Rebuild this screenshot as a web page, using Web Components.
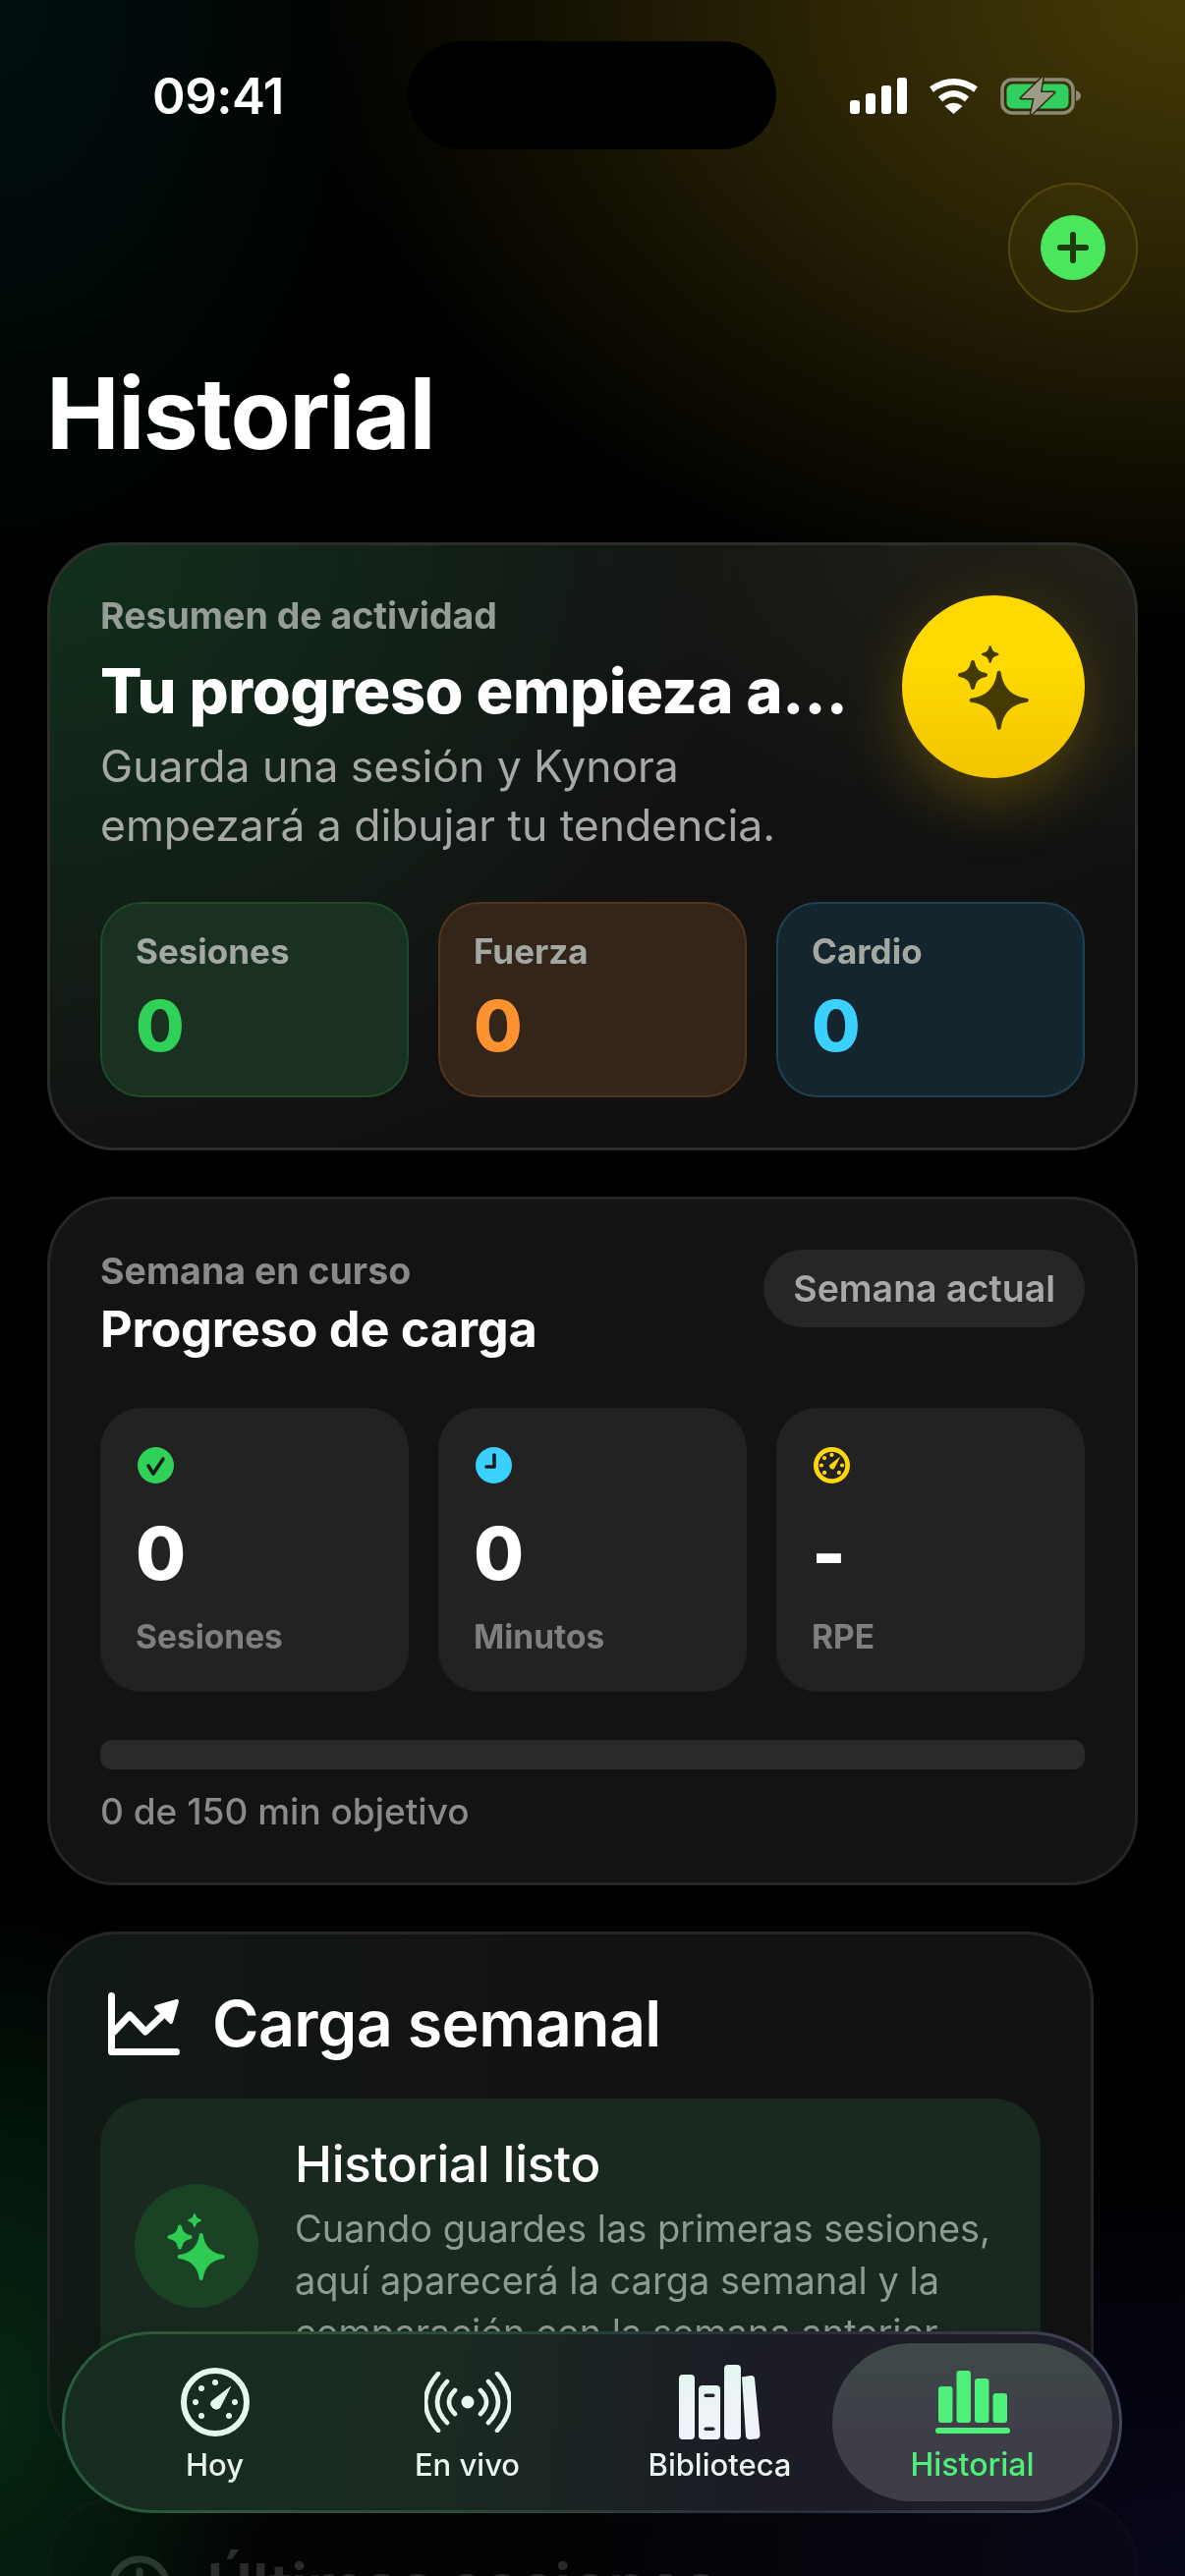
<!doctype html>
<html lang="es">
<head>
<meta charset="utf-8">
<title>Historial</title>
<style>
  html, body { margin: 0; background: #000; }
  body {
    width: 1206px;
    height: 2622px;
    overflow: hidden;
    font-family: Inter, "Noto Sans", sans-serif;
    color: #fff;
  }
</style>
</head>
<body>
<phone-screen>
  <status-bar></status-bar>
  <add-action></add-action>
  <page-title>Historial</page-title>
  <summary-card></summary-card>
  <week-card></week-card>
  <weekly-load-card></weekly-load-card>
  <recent-card></recent-card>
  <tab-bar slot="overlay">
    <tab-item label="Hoy" icon="gauge"></tab-item>
    <tab-item label="En vivo" icon="live"></tab-item>
    <tab-item label="Biblioteca" icon="books"></tab-item>
    <tab-item label="Historial" icon="bars" active></tab-item>
  </tab-bar>
</phone-screen>

<script>
// four pointed star, rounded tips come from the stroke
function star(cx, cy, r, color) {
  const t = r - 2;
  const k = r * 0.11;
  const d = `M${cx} ${cy - t}Q${cx + k} ${cy - k} ${cx + t} ${cy}Q${cx + k} ${cy + k} ${cx} ${cy + t}Q${cx - k} ${cy + k} ${cx - t} ${cy}Q${cx - k} ${cy - k} ${cx} ${cy - t}Z`;
  return `<path d="${d}" fill="${color}" stroke="${color}" stroke-width="${r > 12 ? 4 : 2.4}" stroke-linejoin="round"/>`;
}

function gauge(color, size, ring, dot) {
  const dots = [[35, 15], [21, 21], [15, 35], [55, 35], [21, 49], [49, 49]]
    .map(([x, y]) => `<circle cx="${x}" cy="${y}" r="${dot}"/>`).join("");
  return `<svg width="${size}" height="${size}" viewBox="0 0 70 70" fill="${color}">
    <circle cx="35" cy="35" r="${35 - ring / 2}" fill="none" stroke="${color}" stroke-width="${ring}"/>
    ${dots}
    <path d="M50.5 19.5 39.5 41a5.6 5.6 0 0 1-8.5-6.5Z" stroke="${color}" stroke-linejoin="round"/>
  </svg>`;
}

const icons = {
  gauge: gauge("#e6f7ee", 70, 6, 3),
  live: `<svg width="88" height="62" viewBox="-44 -31 88 62" fill="none" stroke="#e8f6f0" stroke-width="4.6" stroke-linecap="round">
    <circle r="6.5" fill="#e8f6f0" stroke="none"/>
    <path d="M-13-12Q-25 0-13 12M13-12Q25 0 13 12M-21-21Q-41 0-21 21M21-21Q41 0 21 21M-30-29Q-56 0-30 29M30-29Q56 0 30 29"/>
  </svg>`,
  books: `<svg width="83" height="76" viewBox="0 0 83 76">
    <defs><linearGradient id="bk" x1="0" y1="0" x2="0" y2="1"><stop offset="0" stop-color="#e2f6ef"/><stop offset=".5" stop-color="#f0f3f8"/><stop offset="1" stop-color="#f2f2fa"/></linearGradient></defs>
    <g fill="url(#bk)">
      <rect y="10" width="16" height="66" rx="4" />
      <path d="M24 21h14a4 4 0 0 1 4 4v47a4 4 0 0 1-4 4H24a4 4 0 0 1-4-4V25a4 4 0 0 1 4-4Z"/>
      <rect x="46" width="17" height="76" rx="4"/>
      <path d="M64 12.500 73 11a3.500 3.500 0 0 1 4 3l5.500 57a4 4 0 0 1-4 4.500l-6 .5a4 4 0 0 1-4.500-3.500Z"/>
    </g>
    <rect x="25.500" y="29.500" width="11" height="3.500" rx="1.700" fill="#23242c"/>
    <rect x="25.500" y="63.500" width="11" height="3.500" rx="1.700" fill="#23242c"/>
  </svg>`,
  bars: `<svg width="76" height="64" viewBox="0 0 76 64" fill="#4ef07a">
    <rect x="3" y="16" width="14.500" height="37" rx="3"/>
    <rect x="21.500" width="14.500" height="53" rx="3"/>
    <rect x="40" y="8" width="14.500" height="45" rx="3"/>
    <rect x="58.500" y="23" width="14.500" height="30" rx="3"/>
    <rect y="58" width="76" height="6" rx="3"/>
  </svg>`,
  check: `<svg width="37" height="37" viewBox="0 0 37 37"><circle cx="18.500" cy="18.500" r="18.500" fill="#30d158"/><path d="M11 19l5 8 10-15" fill="none" stroke="#1c1c1c" stroke-width="3.600" stroke-linecap="round" stroke-linejoin="round"/></svg>`,
  clock: `<svg width="37" height="37" viewBox="0 0 37 37"><circle cx="18.500" cy="18.500" r="18.500" fill="#3ad0ff"/><path d="M19 8v12h-8" fill="none" stroke="#1c1c1c" stroke-width="3.600" stroke-linecap="round" stroke-linejoin="round"/></svg>`,
  rpe: gauge("#ffd60a", 37, 9, 4),
};

class PhoneScreen extends HTMLElement {
  constructor() {
    super();
    this.attachShadow({ mode: "open" }).innerHTML = `
<style>
  :host {
    display: block;
    position: relative;
    width: 1206px;
    height: 2622px;
    overflow: hidden;
    background:
      radial-gradient(ellipse 900px 640px at 100% 0, #453a06 0, #2a2405 42%, #120f02 74%, rgba(0,0,0,0) 100%),
      radial-gradient(ellipse 420px 640px at 0 0, #011010 0, rgba(0,0,0,0) 100%),
      radial-gradient(ellipse 280px 520px at 0 2450px, #062512 0, #03170b 50%, rgba(0,0,0,0) 100%),
      radial-gradient(ellipse 700px 420px at 100% 2600px, #07071a 0, rgba(0,0,0,0) 100%),
      #000;
  }
  .scroll {
    display: flex;
    flex-direction: column;
    height: 2622px;
    overflow: hidden;
    -webkit-mask-image: linear-gradient(#000 2360px, rgba(0,0,0,.16) 2570px);
    mask-image: linear-gradient(#000 2360px, rgba(0,0,0,.16) 2570px);
  }
</style>
<div class="scroll"><slot></slot></div>
<slot name="overlay"></slot>
`;
  }
}

class StatusBar extends HTMLElement {
  constructor() {
    super();
    this.attachShadow({ mode: "open" }).innerHTML = `
<style>
  :host {
    display: grid;
    grid-template-columns: 415px 375px 1fr;
    align-items: center;
    flex: none;
    height: 110px;
    margin-top: 42px;
  }
  .time {
    font-size: 51px;
    font-weight: 600;
    letter-spacing: -.5px;
    padding-left: 155px;
  }
  .island { height: 110px; border-radius: 55px; background: #000; }
  .icons { display: flex; align-items: center; gap: 22px; padding-left: 75px; }
</style>
<div class="time">09:41</div>
<div class="island"></div>
<div class="icons">
  <svg width="58" height="37" viewBox="0 0 58 37" fill="#fff">
    <rect y="23" width="10" height="14" rx="3"/>
    <rect x="16" y="16" width="10" height="21" rx="3"/>
    <rect x="32" y="8" width="10" height="29" rx="3"/>
    <rect x="48" width="10" height="37" rx="3"/>
  </svg>
  <svg width="51" height="37" viewBox="0 0 51 37" fill="none" stroke="#fff" stroke-width="6.500">
    <path d="M3 12Q25.500-3.500 48 12M12 22Q25.500 10.500 39 22"/>
    <path d="M25.500 37 16.500 29Q25.500 22.500 34.500 29Z" fill="#fff" stroke="none"/>
  </svg>
  <svg width="82" height="39" viewBox="0 0 82 39">
    <rect x="2" y="3" width="72" height="34" rx="10" fill="none" stroke="#8b8a76" stroke-width="3.500"/>
    <rect x="6.500" y="7.500" width="63" height="25" rx="6" fill="#30d060"/>
    <path d="M77 14q5 1.500 5 5.500t-5 5.500Z" fill="#8b8a76"/>
    <path d="M43.500 0 21 22h13.500L31 39l24-23H41Z" fill="#9d9c88" stroke="#2e2a08" stroke-width="3" stroke-linejoin="round" paint-order="stroke"/>
  </svg>
</div>
`;
  }
}

class AddAction extends HTMLElement {
  constructor() {
    super();
    this.attachShadow({ mode: "open" }).innerHTML = `
<style>
  :host {
    display: flex;
    flex: none;
    justify-content: flex-end;
    margin: 34px 48px 0 0;
  }
  .ring {
    display: flex;
    align-items: center;
    justify-content: center;
    box-sizing: border-box;
    width: 132px;
    height: 132px;
    border: 2.500px solid #55460c;
    border-radius: 50%;
    background: rgba(80,66,8,.25);
  }
  .dot {
    display: flex;
    align-items: center;
    justify-content: center;
    width: 66px;
    height: 66px;
    border-radius: 50%;
    background: #4ae75d;
  }
</style>
<div class="ring"><div class="dot">
  <svg width="32" height="32" viewBox="0 0 32 32" stroke="#1d3a10" stroke-width="6" stroke-linecap="round"><path d="M16 3v26M3 16h26"/></svg>
</div></div>
`;
  }
}

class PageTitle extends HTMLElement {
  constructor() {
    super();
    this.attachShadow({ mode: "open" }).innerHTML = `
<style>
  :host {
    display: block;
    flex: none;
    height: 116px;
    margin: 45px 0 73px 47px;
    font-size: 100px;
    line-height: 116px;
    font-weight: 700;
    letter-spacing: -1.500px;
    color: #fff;
  }
</style>
<slot></slot>
`;
  }
}

class StatChip extends HTMLElement {
  constructor() {
    super();
    const [bg, line, num] = {
      green: ["#1a3020", "#1f4a2a", "#30d158"],
      orange: ["#33251a", "#553519", "#ff9230"],
      blue: ["#15252e", "#1d4253", "#3ad0ff"],
    }[this.getAttribute("tone")];
    this.attachShadow({ mode: "open" }).innerHTML = `
<style>
  :host {
    display: block;
    box-sizing: border-box;
    height: 199px;
    padding: 28px 34px;
    border: 2.500px solid ${line};
    border-radius: 42px;
    background: ${bg};
  }
  .label { font-size: 35px; line-height: 40px; font-weight: 700; color: #a3a8a2; }
  .value { margin-top: 14px; font-size: 72px; line-height: 84px; font-weight: 800; color: ${num}; }
</style>
<div class="label">${this.getAttribute("label")}</div>
<div class="value">${this.getAttribute("value")}</div>
`;
  }
}

class CardShell extends HTMLElement {
  shell(css, html) {
    this.attachShadow({ mode: "open" }).innerHTML = `
<style>
  :host {
    display: block;
    flex: none;
    box-sizing: border-box;
    margin: 0 48px 47px;
    border: 3px solid #262626;
    border-radius: 70px;
    background: #131313;
  }
  ${css}
</style>
${html}
`;
  }
}

class SummaryCard extends CardShell {
  constructor() {
    super();
    this.shell(`
  :host {
    height: 619px;
    padding: 51px;
    border-color: #2c2d28;
    background:
      radial-gradient(ellipse 700px 640px at 0 0, #11301c 0, rgba(16,41,26,0) 100%),
      radial-gradient(ellipse 560px 320px at 100% 0, rgba(60,56,30,.42) 0, rgba(60,56,30,0) 100%),
      linear-gradient(160deg, #141414, #0f0f0f);
  }
  .top { display: flex; justify-content: space-between; height: 312px; }
  .label { margin-top: -3px; font-size: 37.500px; line-height: 48px; font-weight: 700; color: #969c96; }
  h2 { margin: 14px 0 0; font-size: 63px; line-height: 76px; font-weight: 800; letter-spacing: -.4px; white-space: nowrap; }
  p { margin: 10px 0 0; font-size: 44.500px; line-height: 59.500px; letter-spacing: -.05px; color: #a6a9a6; }
  .orb {
    flex: none;
    display: block;
    width: 186px;
    height: 186px;
    border-radius: 50%;
    background: linear-gradient(#ffd900 40%, #f1c400);
    box-shadow: 0 22px 66px rgba(255,205,0,.24);
  }
  .stats { display: grid; grid-template-columns: repeat(3, 1fr); gap: 30px; }
`, `
<div class="top">
  <div>
    <div class="label">Resumen de actividad</div>
    <h2>Tu progreso empieza a…</h2>
    <p>Guarda una sesión y Kynora<br>empezará a dibujar tu tendencia.</p>
  </div>
  <svg class="orb" viewBox="0 0 186 186">
    ${star(98.7, 106.7, 30, "#453a00")}
    ${star(72, 81, 15, "#453a00")}
    ${star(89.7, 60, 9.5, "#453a00")}
  </svg>
</div>
<div class="stats">
  <stat-chip tone="green" label="Sesiones" value="0"></stat-chip>
  <stat-chip tone="orange" label="Fuerza" value="0"></stat-chip>
  <stat-chip tone="blue" label="Cardio" value="0"></stat-chip>
</div>
`);
  }
}

class MetricTile extends HTMLElement {
  constructor() {
    super();
    this.attachShadow({ mode: "open" }).innerHTML = `
<style>
  :host {
    display: block;
    box-sizing: border-box;
    height: 289px;
    padding: 40px 36px 0;
    border-radius: 42px;
    background: #222;
  }
  .icon { display: block; height: 37px; margin-left: 2px; }
  .value { margin-top: 27px; font-size: 74px; line-height: 88px; font-weight: 800; }
  .label { margin-top: 21px; font-size: 33.500px; line-height: 40px; font-weight: 700; color: #7f7f7f; }
</style>
<div class="icon">${icons[this.getAttribute("icon")]}</div>
<div class="value">${this.getAttribute("value")}</div>
<div class="label">${this.getAttribute("label")}</div>
`;
  }
}

class WeekCard extends CardShell {
  constructor() {
    super();
    this.shell(`
  :host { height: 701px; padding: 51px; }
  .head { display: flex; justify-content: space-between; height: 161px; }
  .label { margin-top: -2px; font-size: 37.500px; line-height: 48px; font-weight: 700; color: #8a8a8a; }
  h2 { margin: 5px 0 0; font-size: 50.500px; line-height: 60px; font-weight: 700; letter-spacing: -.3px; }
  .pill {
    box-sizing: border-box;
    height: 79px;
    padding: 0 30px;
    border-radius: 40px;
    background: #262626;
    font-size: 37.500px;
    line-height: 79px;
    font-weight: 600;
    color: #a8a8a8;
  }
  .tiles { display: grid; grid-template-columns: repeat(3, 1fr); gap: 30px; }
  .track { height: 30px; margin-top: 49px; border-radius: 12px; background: #2a2a2a; }
  .note { margin-top: 21px; font-size: 37px; line-height: 44px; font-weight: 500; color: #8a8a8a; }
`, `
<div class="head">
  <div>
    <div class="label">Semana en curso</div>
    <h2>Progreso de carga</h2>
  </div>
  <div class="pill">Semana actual</div>
</div>
<div class="tiles">
  <metric-tile icon="check" value="0" label="Sesiones"></metric-tile>
  <metric-tile icon="clock" value="0" label="Minutos"></metric-tile>
  <metric-tile icon="rpe" value="-" label="RPE"></metric-tile>
</div>
<div class="track"></div>
<div class="note">0 de 150 min objetivo</div>
`);
  }
}

class WeeklyLoadCard extends CardShell {
  constructor() {
    super();
    this.shell(`
  :host {
    height: 545px;
    margin: 0 93px 30px 48px;
    padding: 51px;
    overflow: hidden;
    background: linear-gradient(90deg, #111a15, #121212 45%);
  }
  .head { display: flex; align-items: flex-start; gap: 33px; box-sizing: border-box; height: 116px; padding: 8px 0 0 8px; }
  h2 { margin: -6px 0 0; font-size: 64.500px; line-height: 76px; font-weight: 600; letter-spacing: -.6px; }
  .box {
    display: flex;
    align-items: center;
    gap: 37px;
    box-sizing: border-box;
    height: 360px;
    padding: 0 35px;
    border-radius: 48px;
    background: #19291f;
  }
  .badge { flex: none; display: block; width: 126px; height: 126px; margin-top: -60px; border-radius: 50%; background: #1c4226; }
  .copy { align-self: flex-start; padding-top: 37px; }
  h3 { margin: 0; font-size: 51px; line-height: 60px; font-weight: 500; letter-spacing: -.3px; }
  p { margin: 9px 0 0; font-size: 38px; line-height: 53px; color: #8f9a92; white-space: nowrap; }
`, `
<div class="head">
  <svg width="73" height="64" viewBox="0 0 73 64" fill="none" stroke="#fff" stroke-width="7" stroke-linecap="round" stroke-linejoin="round">
    <path d="M3.500 3.500V60.500H69.500"/>
    <path d="M6 40 22 23 38 40 54 25"/>
    <path d="M70 9 49 15 64 30Z" fill="#fff" stroke-width="4"/>
  </svg>
  <h2>Carga semanal</h2>
</div>
<div class="box">
  <svg class="badge" viewBox="0 0 126 126">
    ${star(67.7, 74, 24, "#2fcc55")}
    ${star(46, 54, 12.5, "#2fcc55")}
    ${star(61, 37, 7.5, "#2fcc55")}
  </svg>
  <div class="copy">
    <h3>Historial listo</h3>
    <p>Cuando guardes las primeras sesiones,<br>aquí aparecerá la carga semanal y la<br>comparación con la semana anterior.</p>
  </div>
</div>
`);
  }
}

class RecentCard extends CardShell {
  constructor() {
    super();
    this.shell(`
  :host { height: 400px; padding: 51px; background: #131313; }
  .head { display: flex; align-items: center; gap: 36px; padding-left: 8px; }
  h2 { margin: 0; font-size: 64.500px; line-height: 76px; font-weight: 600; letter-spacing: -.6px; }
`, `
<div class="head">
  <svg width="64" height="64" viewBox="0 0 64 64" fill="none" stroke="#fff" stroke-width="7" stroke-linecap="round">
    <circle cx="32" cy="32" r="28"/><path d="M32 16v16l11 7"/>
  </svg>
  <h2>Últimas sesiones</h2>
</div>
`);
  }
}

class TabBar extends HTMLElement {
  constructor() {
    super();
    this.attachShadow({ mode: "open" }).innerHTML = `
<style>
  :host {
    position: absolute;
    left: 63px;
    top: 2373px;
    box-sizing: border-box;
    display: grid;
    grid-template-columns: repeat(4, 257px);
    width: 1079px;
    height: 185px;
    padding: 9px 22px 9px 24px;
    border: 3px solid transparent;
    border-radius: 92px;
    background:
      linear-gradient(95deg, rgba(20,42,29,.95), rgba(26,40,32,.95) 35%, rgba(26,27,36,.96) 65%, rgba(28,28,38,.96)) padding-box,
      linear-gradient(95deg, #2a5e3c, #2a4a38 40%, #2a2b3a 70%, #46465e) border-box;
    -webkit-backdrop-filter: blur(20px);
    backdrop-filter: blur(20px);
  }
</style>
<slot></slot>
`;
  }
}

class TabItem extends HTMLElement {
  constructor() {
    super();
    const active = this.hasAttribute("active");
    this.attachShadow({ mode: "open" }).innerHTML = `
<style>
  :host {
    display: block;
    position: relative;
    text-align: center;
    height: 161px;
  }
  :host([active])::before {
    content: "";
    position: absolute;
    inset: 0 -14px;
    border-radius: 81px;
    background: linear-gradient(#3e4a48, #3e3e48 55%);
  }
  .icon {
    position: relative;
    display: flex;
    align-items: center;
    justify-content: center;
    height: 80px;
    padding-top: 20px;
  }
  .label {
    position: relative;
    margin-top: 6px;
    font-size: ${active ? 32 : 31}px;
    line-height: 36px;
    font-weight: 500;
    color: ${active ? "#4ef07a" : "#eaf5f0"};
  }
</style>
<div class="icon">${icons[this.getAttribute("icon")]}</div>
<div class="label">${this.getAttribute("label")}</div>
`;
  }
}

customElements.define("phone-screen", PhoneScreen);
customElements.define("status-bar", StatusBar);
customElements.define("add-action", AddAction);
customElements.define("page-title", PageTitle);
customElements.define("stat-chip", StatChip);
customElements.define("summary-card", SummaryCard);
customElements.define("metric-tile", MetricTile);
customElements.define("week-card", WeekCard);
customElements.define("weekly-load-card", WeeklyLoadCard);
customElements.define("recent-card", RecentCard);
customElements.define("tab-item", TabItem);
customElements.define("tab-bar", TabBar);
</script>
</body>
</html>
